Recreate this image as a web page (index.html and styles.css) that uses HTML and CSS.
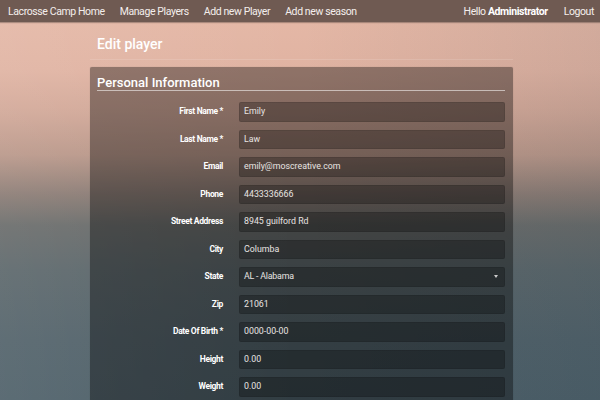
FILE: index.html
```html
<!DOCTYPE html>
<html>
<head>
<meta charset="utf-8">
<link rel="stylesheet" href="styles.css">
</head>
<body>
<nav class="navbar">
  <div class="nav-left">
    <a class="nav-link">Lacrosse Camp Home</a>
    <a class="nav-link">Manage Players</a>
    <a class="nav-link">Add new Player</a>
    <a class="nav-link">Add new season</a>
  </div>
  <div class="nav-right">
    <span class="nav-link">Hello <b>Administrator</b></span>
    <a class="nav-link">Logout</a>
  </div>
</nav>
<main class="container">
  <h1 class="page-title">Edit player</h1>
  <section class="panel">
    <h2 class="panel-title">Personal Information</h2>
    <div class="form">
      <label class="lbl">First Name *</label><div class="field">Emily</div>
      <label class="lbl">Last Name *</label><div class="field">Law</div>
      <label class="lbl">Email</label><div class="field">emily@moscreative.com</div>
      <label class="lbl">Phone</label><div class="field">4433336666</div>
      <label class="lbl">Street Address</label><div class="field">8945 guilford Rd</div>
      <label class="lbl">City</label><div class="field">Columba</div>
      <label class="lbl">State</label><div class="field select"><span class="small">AL - Alabama</span><span class="caret"></span></div>
      <label class="lbl">Zip</label><div class="field">21061</div>
      <label class="lbl">Date Of Birth *</label><div class="field">0000-00-00</div>
      <label class="lbl">Height</label><div class="field">0.00</div>
      <label class="lbl">Weight</label><div class="field">0.00</div>
    </div>
  </section>
</main>
</body>
</html>
```
FILE: styles.css
```css
* { box-sizing: border-box; }
html, body { margin: 0; height: 100%; }
body {
  font-family: Roboto, "Liberation Sans", sans-serif;
  color: #fff;
  background:
    linear-gradient(180deg, #e6b9a7 0px, #e0b3a2 70px, #d2a898 110px, #b99789 155px, #8a7b74 195px, #6a6c6b 225px, #5c676b 270px, #52626a 340px, #4e6069 400px);
  overflow: hidden;
  position: relative;
}
body::before {
  content: "";
  position: absolute;
  inset: 0;
  background: linear-gradient(90deg, rgba(255,255,255,0.08), rgba(255,255,255,0) 50%, rgba(0,30,50,0.08));
  pointer-events: none;
}
.navbar {
  position: relative;
  height: 22px;
  background: #6f5a52;
  box-shadow: 0 1px 1px rgba(0,0,0,0.25);
  display: flex;
  justify-content: space-between;
  align-items: center;
  padding: 0 6px 0 8px;
  font-size: 10.5px;
  letter-spacing: -0.4px;
}
.nav-left, .nav-right { display: flex; gap: 15px; align-items: center; }
.nav-right { gap: 16px; }
.nav-link { color: #f4eeec; text-decoration: none; }
.nav-link b { font-weight: 700; color: #fff; }
.container {
  position: relative;
  width: 423px;
  margin-left: 90px;
}
.page-title {
  font-size: 14px;
  font-weight: 500;
  margin: 0;
  padding: 14px 7px 7px;
  border-bottom: 1px solid rgba(255,255,255,0.12);
}
.panel {
  margin-top: 7px;
  background: rgba(0,0,0,0.36);
  border-radius: 2px;
  box-shadow: 0 0 1px rgba(0,0,0,0.3);
  padding: 9px 8px 20px 7px;
}
.panel-title {
  font-size: 13px;
  font-weight: 500;
  margin: 0;
  padding: 0;
  line-height: 14px;
  border-bottom: 1px solid rgba(255,255,255,0.55);
}
.form {
  margin-top: 11px;
  display: grid;
  grid-template-columns: 126px 1fr;
  column-gap: 15px;
  row-gap: 8px;
}
.lbl {
  text-align: right;
  font-size: 8.5px;
  font-weight: 700;
  letter-spacing: -0.35px;
  line-height: 19.5px;
  align-self: start;
}
.field {
  height: 19.5px;
  margin-left: 1px;
  background: rgba(0,0,0,0.27);
  border-radius: 2px;
  box-shadow: inset 0 0 0 1px rgba(0,0,0,0.08);
  font-size: 8.8px;
  color: #e8e4e2;
  padding-left: 5px;
  line-height: 19.5px;
  position: relative;
}
.small { letter-spacing: -0.2px; }
.caret {
  position: absolute;
  right: 7px;
  top: 8px;
  width: 0;
  height: 0;
  border-left: 2px solid transparent;
  border-right: 2px solid transparent;
  border-top: 3px solid #ccc;
}
```
